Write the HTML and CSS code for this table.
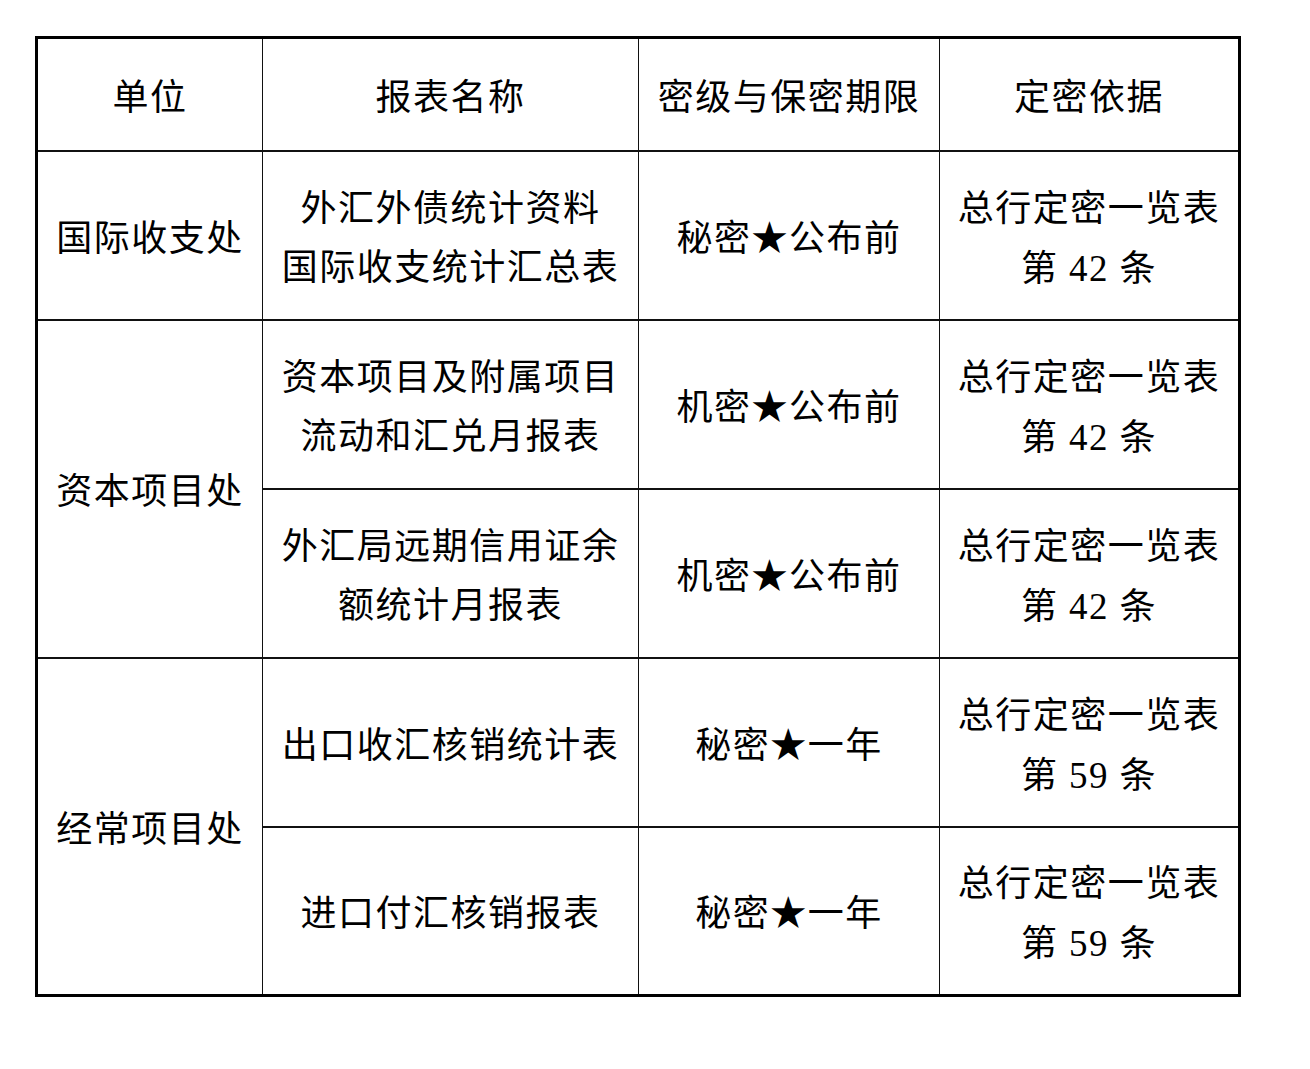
FILE: index.html
```html
<!DOCTYPE html>
<html lang="zh-CN">
<head>
<meta charset="utf-8">
<title>定密表</title>
<link rel="stylesheet" href="styles.css">
</head>
<body>
<table class="grid">
  <colgroup>
    <col class="c1"><col class="c2"><col class="c3"><col class="c4">
  </colgroup>
  <tr class="head">
    <td>单位</td><td>报表名称</td><td>密级与保密期限</td><td>定密依据</td>
  </tr>
  <tr class="row">
    <td>国际收支处</td>
    <td>外汇外债统计资料<br>国际收支统计汇总表</td>
    <td>秘密★公布前</td>
    <td>总行定密一览表<br>第 <span class="num">42</span> 条</td>
  </tr>
  <tr class="row">
    <td rowspan="2">资本项目处</td>
    <td>资本项目及附属项目<br>流动和汇兑月报表</td>
    <td>机密★公布前</td>
    <td>总行定密一览表<br>第 <span class="num">42</span> 条</td>
  </tr>
  <tr class="row">
    <td>外汇局远期信用证余<br>额统计月报表</td>
    <td>机密★公布前</td>
    <td>总行定密一览表<br>第 <span class="num">42</span> 条</td>
  </tr>
  <tr class="row">
    <td rowspan="2">经常项目处</td>
    <td>出口收汇核销统计表</td>
    <td>秘密★一年</td>
    <td>总行定密一览表<br>第 <span class="num">59</span> 条</td>
  </tr>
  <tr class="row">
    <td>进口付汇核销报表</td>
    <td>秘密★一年</td>
    <td>总行定密一览表<br>第 <span class="num">59</span> 条</td>
  </tr>
</table>
</body>
</html>
```
FILE: styles.css
```css
html, body {
  margin: 0;
  background: #ffffff;
}
body {
  padding: 36px 0 0 35px;
  font-family: "Liberation Serif", "Noto Sans CJK SC", serif;
  color: #000;
}
.grid {
  border-collapse: collapse;
  border: 3px solid #000;
  table-layout: fixed;
  width: 1206px;
}
.c1 { width: 226px; }
.c2 { width: 376px; }
.c3 { width: 301px; }
.c4 { width: 300px; }
.grid td {
  border-top: 2px solid #111;
  border-bottom: 2px solid #111;
  border-left: 1.5px solid #111;
  border-right: 1.5px solid #111;
  text-align: center;
  vertical-align: middle;
  font-size: 36px;
  line-height: 59px;
  padding: 8px 0 0 0;
  font-weight: 400;
  letter-spacing: 1.5px;
}
.head { height: 113px; }
.row { height: 169px; }
.num {
  font-family: "Liberation Serif", serif;
  font-size: 37px;
}
```
